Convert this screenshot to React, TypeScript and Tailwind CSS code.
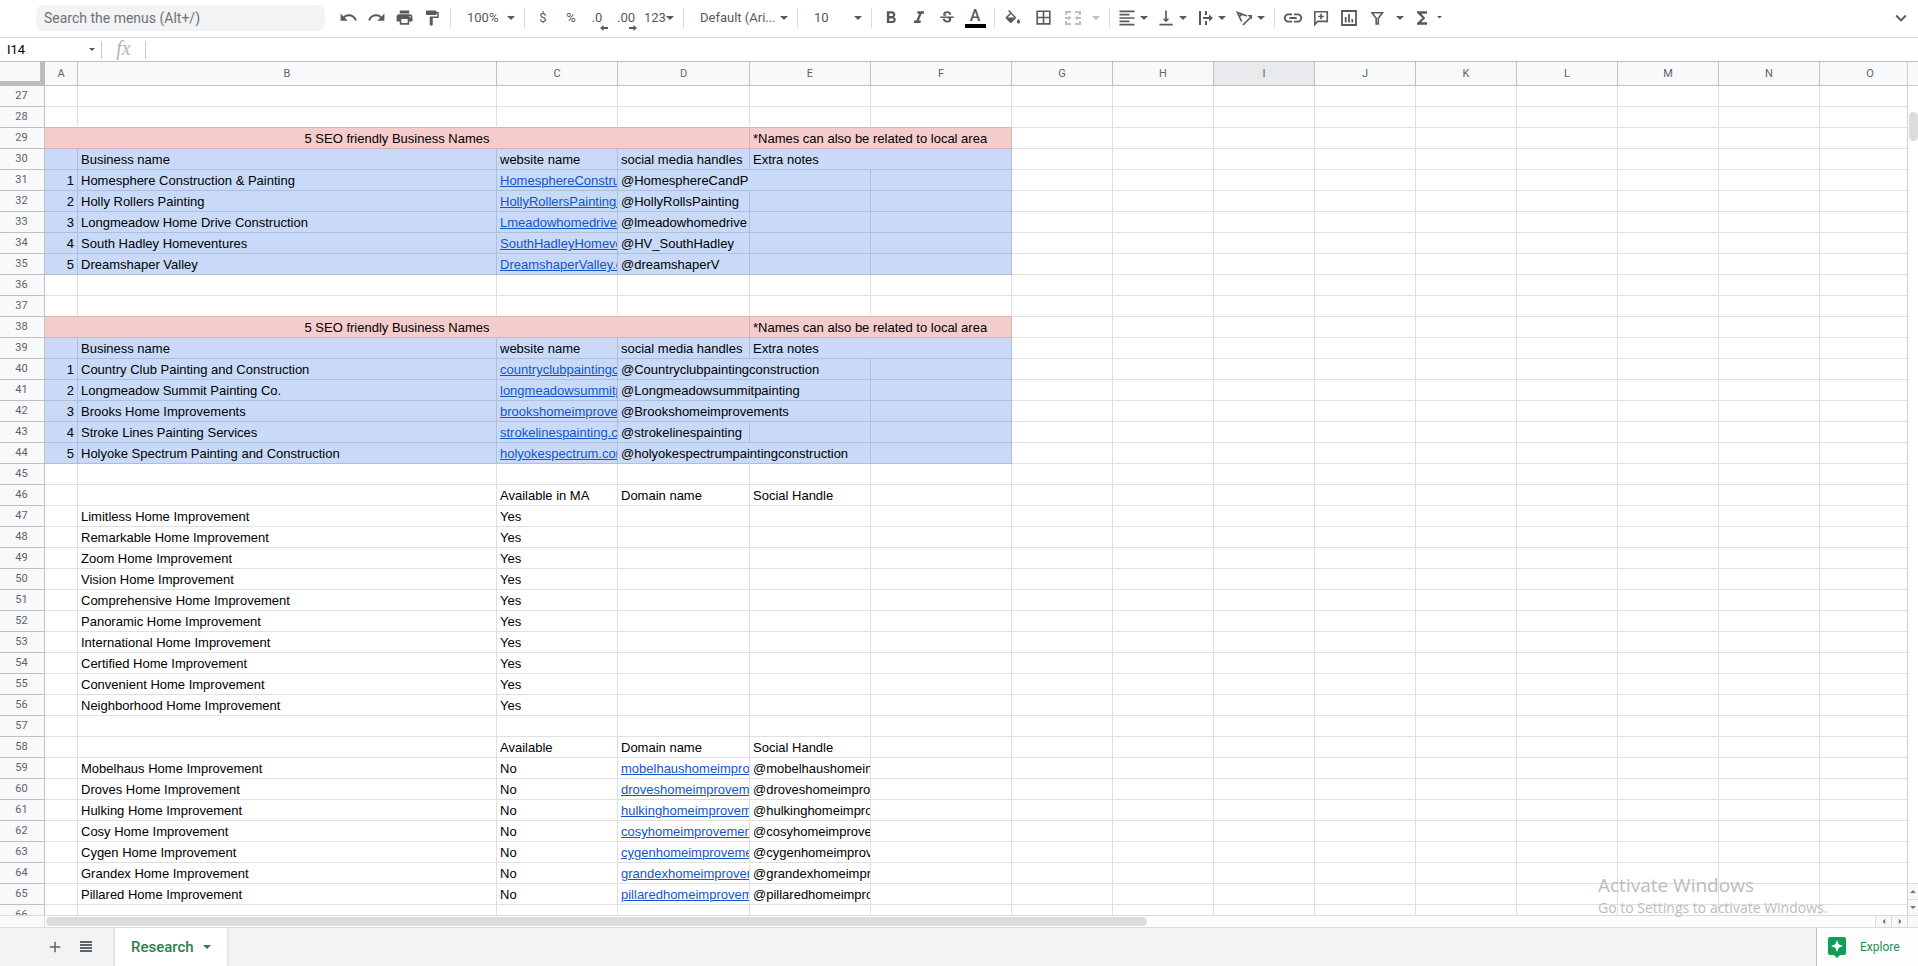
import React from 'react';
import {
  MdAdd,
  MdBorderAll,
  MdFormatAlignLeft,
  MdFormatBold,
  MdFormatItalic,
  MdFormatPaint,
  MdFunctions,
  MdInsertLink,
  MdKeyboardArrowDown,
  MdPrint,
  MdRedo,
  MdStrikethroughS,
  MdUndo,
  MdVerticalAlignBottom,
} from 'react-icons/md';

interface Cell {
  text?: string;
  span?: number;
  link?: boolean;
  align?: 'center' | 'right';
  spill?: boolean; // text runs over the empty neighbour
}

interface Row {
  n: number;
  fill?: 'pink' | 'blue';
  abovePink?: boolean;
  cells?: Cell[];
}

const COLUMNS = ['A', 'B', 'C', 'D', 'E', 'F', 'G', 'H', 'I', 'J', 'K', 'L', 'M', 'N', 'O'];
const FILLED_COLUMNS = 6; // A to F carry the coloured blocks

const titleRow = (n: number): Row => ({
  n,
  fill: 'pink',
  cells: [
    { text: '5 SEO friendly Business Names', span: 4, align: 'center' },
    { text: '*Names can also be related to local area', span: 2 },
  ],
});

const headingRow = (n: number): Row => ({
  n,
  fill: 'blue',
  cells: [
    {},
    { text: 'Business name' },
    { text: 'website name' },
    { text: 'social media handles' },
    { text: 'Extra notes', span: 2 },
  ],
});

const businessRow = (n: number, index: number, name: string, site: string, handle: string, spill = false): Row => ({
  n,
  fill: 'blue',
  cells: [
    { text: String(index), align: 'right' },
    { text: name },
    { text: site, link: true },
    { text: handle, spill },
    {},
    {},
  ],
});

const plainRow = (n: number, name: string, available: string, domain = '', handle = ''): Row => ({
  n,
  cells: [{}, { text: name }, { text: available }, { text: domain, link: domain.includes('.com') }, { text: handle }, {}],
});

const ROWS: Row[] = [
  { n: 27 },
  { n: 28, abovePink: true },
  titleRow(29),
  headingRow(30),
  businessRow(31, 1, 'Homesphere Construction & Painting', 'HomesphereConstruction.com', '@HomesphereCandP', true),
  businessRow(32, 2, 'Holly Rollers Painting', 'HollyRollersPainting.com', '@HollyRollsPainting'),
  businessRow(33, 3, 'Longmeadow Home Drive Construction', 'Lmeadowhomedrive.com', '@lmeadowhomedrive'),
  businessRow(34, 4, 'South Hadley Homeventures', 'SouthHadleyHomeventures.com', '@HV_SouthHadley'),
  businessRow(35, 5, 'Dreamshaper Valley', 'DreamshaperValley.com', '@dreamshaperV'),
  { n: 36 },
  { n: 37, abovePink: true },
  titleRow(38),
  headingRow(39),
  businessRow(40, 1, 'Country Club Painting and Construction', 'countryclubpaintingconstruction.com', '@Countryclubpaintingconstruction', true),
  businessRow(41, 2, 'Longmeadow Summit Painting Co.', 'longmeadowsummitpainting.com', '@Longmeadowsummitpainting', true),
  businessRow(42, 3, 'Brooks Home Improvements', 'brookshomeimprovements.com', '@Brookshomeimprovements', true),
  businessRow(43, 4, 'Stroke Lines Painting Services', 'strokelinespainting.com', '@strokelinespainting'),
  businessRow(44, 5, 'Holyoke Spectrum Painting and Construction', 'holyokespectrum.com', '@holyokespectrumpaintingconstruction', true),
  { n: 45 },
  plainRow(46, '', 'Available in MA', 'Domain name', 'Social Handle'),
  plainRow(47, 'Limitless Home Improvement', 'Yes'),
  plainRow(48, 'Remarkable Home Improvement', 'Yes'),
  plainRow(49, 'Zoom Home Improvement', 'Yes'),
  plainRow(50, 'Vision Home Improvement', 'Yes'),
  plainRow(51, 'Comprehensive Home Improvement', 'Yes'),
  plainRow(52, 'Panoramic Home Improvement', 'Yes'),
  plainRow(53, 'International Home Improvement', 'Yes'),
  plainRow(54, 'Certified Home Improvement', 'Yes'),
  plainRow(55, 'Convenient Home Improvement', 'Yes'),
  plainRow(56, 'Neighborhood Home Improvement', 'Yes'),
  { n: 57 },
  plainRow(58, '', 'Available', 'Domain name', 'Social Handle'),
  plainRow(59, 'Mobelhaus Home Improvement', 'No', 'mobelhaushomeimprovement.com', '@mobelhaushomeimprovement'),
  plainRow(60, 'Droves Home Improvement', 'No', 'droveshomeimprovement.com', '@droveshomeimprovement'),
  plainRow(61, 'Hulking Home Improvement', 'No', 'hulkinghomeimprovement.com', '@hulkinghomeimprovement'),
  plainRow(62, 'Cosy Home Improvement', 'No', 'cosyhomeimprovement.com', '@cosyhomeimprovement'),
  plainRow(63, 'Cygen Home Improvement', 'No', 'cygenhomeimprovement.com', '@cygenhomeimprovement'),
  plainRow(64, 'Grandex Home Improvement', 'No', 'grandexhomeimprovement.com', '@grandexhomeimprovement'),
  plainRow(65, 'Pillared Home Improvement', 'No', 'pillaredhomeimprovement.com', '@pillaredhomeimprovement'),
  { n: 66 },
];

const Caret = ({ className = 'w-2' }: { className?: string }) => (
  <svg viewBox="0 0 8 4" className={`shrink-0 fill-current ${className}`} aria-hidden="true">
    <path d="M0 0h8L4 4z" />
  </svg>
);

const Separator = () => <div className="mx-1 h-5 w-px shrink-0 bg-[#dadce0]" />;

const IconButton = ({ label, children }: { label: string; children: React.ReactNode }) => (
  <button type="button" aria-label={label} className="flex h-7 w-7 shrink-0 items-center justify-center">
    {children}
  </button>
);

const MenuButton = ({ label, children }: { label: string; children: React.ReactNode }) => (
  <button type="button" aria-label={label} className="flex h-7 w-[39px] shrink-0 items-center gap-[3px] pl-[3px]">
    {children}
    <Caret />
  </button>
);

const CaretButton = ({ label, className = '' }: { label: string; className?: string }) => (
  <button type="button" aria-label={label} className={`flex h-7 w-[18px] shrink-0 items-center justify-center ${className}`}>
    <Caret />
  </button>
);

const Picker = ({ label, value, className }: { label: string; value: string; className: string }) => (
  <div className={`relative flex h-7 shrink-0 items-center ${className}`}>
    <select aria-label={label} className="w-full appearance-none bg-transparent pl-3 text-[13px] leading-5 outline-none">
      <option>{value}</option>
    </select>
    <Caret className="pointer-events-none absolute right-[5px] w-2" />
  </div>
);

const FillIcon = () => (
  <svg viewBox="0 0 18 18" className="size-[18px] fill-current">
    <path
      fillRule="evenodd"
      d="M5.2 1 4.1 2.1l1.9 1.9L1.9 8.1c-.4.4-.4 1 0 1.4l4.2 4.2c.4.4 1 .4 1.4 0l4.9-4.9zM7 5.1l3.4 3.4H3.6zM14.5 10s-1.6 1.8-1.6 2.9a1.6 1.6 0 0 0 3.2 0c0-1.100-1.600-2.900-1.600-2.900z"
    />
  </svg>
);

const MergeIcon = () => (
  <svg viewBox="0 0 18 18" className="size-[18px] fill-none stroke-current" strokeWidth="2">
    <path d="M2 6V3h5M11 3h5v3M2 12v3h5M11 15h5v-3M1 9h4M17 9h-4" />
    <path d="M4.500 6.500 7.500 9l-3 2.500zM13.500 6.500 10.500 9l3 2.500z" className="fill-current" strokeWidth="0" />
  </svg>
);

const WrapIcon = () => (
  <svg viewBox="0 0 20 20" className="size-5 fill-none stroke-current" strokeWidth="2">
    <path d="M5 3v14M11 3v4M11 13v4M8 10h9" />
    <path d="m14 6.500 4 3.500-4 3.500z" className="fill-current" strokeWidth="0" />
  </svg>
);

const RotateIcon = () => (
  <svg viewBox="0 0 20 20" className="size-5 fill-none stroke-current" strokeWidth="1.700">
    <path d="m7.500 13.500-4-9 9.500 3.500M5 8.500l3.500-2.500M9 17l8-8" />
    <path d="M13.500 7H18v4.500z" className="fill-current" strokeWidth="0" />
  </svg>
);

const CommentIcon = () => (
  <svg viewBox="0 0 18 18" className="size-[18px] fill-none stroke-current" strokeWidth="1.600">
    <path d="M2.800 15.500V2.800h12.500v9.600H5.700zM9 4.800v5.400M6.300 7.500h5.400" />
  </svg>
);

const ChartIcon = () => (
  <svg viewBox="0 0 18 18" className="size-[18px] fill-none stroke-current" strokeWidth="1.800">
    <path d="M2 2h14v14H2zM5.700 8v5.500M9 5v8.500M12.300 10v3.500" />
  </svg>
);

const FilterIcon = () => (
  <svg viewBox="0 0 18 18" className="size-[18px] fill-none stroke-current" strokeWidth="1.600">
    <path d="M4 3.800h10.500l-4.200 5.400V15H8.200V9.200z" />
  </svg>
);

const DecimalArrow = ({ right = false }: { right?: boolean }) => (
  <svg viewBox="0 0 8 6" className={`absolute -bottom-1 w-2 fill-current ${right ? '-right-0.5' : '-right-1.5'}`}>
    {right ? <path d="M0 2h4.500V0L8 3 4.500 6V4H0z" /> : <path d="M8 2H3.500V0L0 3l3.500 3V4H8z" />}
  </svg>
);

function Toolbar() {
  return (
    <div className="flex h-[38px] shrink-0 items-center border-b border-[#dadce0] pr-[3px] pb-0.5 pl-9 text-[13px] text-[#575a5e]">
      <input
        aria-label="Search the menus"
        placeholder="Search the menus (Alt+/)"
        className="mr-[9px] h-[26px] w-[289px] shrink-0 rounded-lg bg-[#f1f3f4] px-2 text-sm outline-none placeholder:text-[#6f7276]"
      />
      <IconButton label="Undo"><MdUndo className="size-[19px]" /></IconButton>
      <IconButton label="Redo"><MdRedo className="size-[19px]" /></IconButton>
      <IconButton label="Print"><MdPrint className="size-[19px]" /></IconButton>
      <IconButton label="Paint format"><MdFormatPaint className="size-[18px]" /></IconButton>
      <Separator />
      <Picker label="Zoom" value="100%" className="w-[65px]" />
      <Separator />
      <IconButton label="Format as currency">$</IconButton>
      <IconButton label="Format as percent">%</IconButton>
      <IconButton label="Decrease decimal places">
        <span className="relative mr-1">.0<DecimalArrow /></span>
      </IconButton>
      <IconButton label="Increase decimal places">
        <span className="relative mr-0.5">.00<DecimalArrow right /></span>
      </IconButton>
      <button type="button" className="flex h-7 w-[38px] shrink-0 items-center pl-[3px]">
        123<Caret />
      </button>
      <Separator />
      <Picker label="Font" value="Default (Ari..." className="w-[105px]" />
      <Separator />
      <Picker label="Font size" value="10" className="w-[65px]" />
      <Separator />
      <div className="flex px-px">
        <IconButton label="Bold"><MdFormatBold className="size-5" /></IconButton>
        <IconButton label="Italic"><MdFormatItalic className="size-5" /></IconButton>
        <IconButton label="Strikethrough"><MdStrikethroughS className="size-[18px]" /></IconButton>
        <IconButton label="Text color">
          <span className="w-[21px] border-b-4 border-black text-center text-base leading-[17px] font-medium">A</span>
        </IconButton>
      </div>
      <Separator />
      <div className="flex gap-0.5">
        <IconButton label="Fill color"><FillIcon /></IconButton>
        <IconButton label="Borders"><MdBorderAll className="size-[19px]" /></IconButton>
        <div className="flex text-[#bdbfc2]">
          <IconButton label="Merge cells"><MergeIcon /></IconButton>
          <CaretButton label="Merge type" />
        </div>
      </div>
      <Separator />
      <MenuButton label="Horizontal align"><MdFormatAlignLeft className="size-5" /></MenuButton>
      <MenuButton label="Vertical align"><MdVerticalAlignBottom className="size-5" /></MenuButton>
      <MenuButton label="Text wrapping"><WrapIcon /></MenuButton>
      <MenuButton label="Text rotation"><RotateIcon /></MenuButton>
      <Separator />
      <IconButton label="Insert link"><MdInsertLink className="size-[22px]" /></IconButton>
      <IconButton label="Insert comment"><CommentIcon /></IconButton>
      <IconButton label="Insert chart"><ChartIcon /></IconButton>
      <IconButton label="Create a filter"><FilterIcon /></IconButton>
      <CaretButton label="Filter views" />
      <button type="button" aria-label="Functions" className="flex h-7 w-9 shrink-0 items-center gap-[5px] pl-[3px]">
        <MdFunctions className="size-5" />
        <Caret className="w-[5px]" />
      </button>
      <div className="ml-auto">
        <IconButton label="Hide the menus"><MdKeyboardArrowDown className="size-[22px]" /></IconButton>
      </div>
    </div>
  );
}

function FormulaBar() {
  return (
    <div className="flex h-6 shrink-0 items-center border-b border-[#c0c0c0]">
      <div className="relative flex h-full w-[101px] items-center text-[#575a5e]">
        <input aria-label="Name box" defaultValue="I14" className="w-full pl-[7px] text-[13px] text-black outline-none" />
        <Caret className="pointer-events-none absolute right-1.5 w-[6px]" />
      </div>
      <div className="h-[18px] w-px bg-[#c8cacd]" />
      <label htmlFor="formula" className="w-[43px] pb-1 text-center font-['Liberation_Serif',serif] text-xl leading-5 text-[#b4b4b4] italic">
        fx
      </label>
      <div className="h-[18px] w-px bg-[#c8cacd]" />
      <input id="formula" className="h-full flex-1 px-2 text-[13px] outline-none" />
    </div>
  );
}

const FILLS = {
  pink: 'bg-[#f4cccc]',
  blue: 'bg-[#c9daf8]',
};

function SheetRow({ row }: { row: Row }) {
  const cells = row.cells ?? Array.from({ length: FILLED_COLUMNS }, () => ({}) as Cell);
  return (
    <tr>
      <th scope="row" className="h-[21px] border-r border-b border-[#c0c0c0] bg-[#f8f9fa] p-0 pr-px align-top font-['Roboto',sans-serif] text-[11px] leading-[19px] font-normal text-[#5f6368]">
        {row.n}
      </th>
      {cells.map((cell, i) => (
        <td
          key={i}
          colSpan={cell.span}
          className={`h-[21px] border-r border-b px-[3px] pt-0.5 pb-0 whitespace-nowrap ${row.fill ? FILLS[row.fill] : ''} ${
            row.abovePink ? 'border-r-black/12 border-b-[#d9b6b6]' : 'border-black/12'
          } ${cell.spill ? 'overflow-visible border-r-transparent' : 'overflow-hidden'} ${
            cell.align === 'center' ? 'text-center' : cell.align === 'right' ? 'text-right' : 'text-left'
          }`}
        >
          {cell.link ? (
            <a href={`http://${cell.text}`} className="text-[#1155cc] underline">{cell.text}</a>
          ) : (
            cell.text
          )}
        </td>
      ))}
      {COLUMNS.slice(FILLED_COLUMNS).map((c) => (
        <td key={c} className="border-r border-b border-black/12 p-0" />
      ))}
    </tr>
  );
}

function Sheet() {
  return (
    <div className="min-w-0 flex-1 overflow-hidden">
      <table className="w-px table-fixed border-separate border-spacing-0 font-['Liberation_Sans',Arial,sans-serif] text-[13px] leading-[18px] text-black">
        <colgroup>
          <col className="w-[45px]" />
          <col className="w-[33px]" />
          <col className="w-[419px]" />
          <col className="w-[121px]" />
          <col className="w-[132px]" />
          <col className="w-[121px]" />
          <col className="w-[141px]" />
          {COLUMNS.slice(FILLED_COLUMNS).map((c) => (
            <col key={c} className="w-[101px]" />
          ))}
        </colgroup>
        <thead>
          <tr>
            <td className="h-6 border-r-[5px] border-b-[5px] border-[#bdbdbd] bg-[#f8f9fa] p-0" />
            {COLUMNS.map((c) => (
              <th
                key={c}
                scope="col"
                className={`h-6 border-r border-b border-[#c0c0c0] p-0 font-['Roboto',sans-serif] text-[11px] font-normal text-[#5f6368] ${
                  c === 'I' ? 'bg-[#e8eaed]' : 'bg-[#f8f9fa]'
                }`}
              >
                {c}
              </th>
            ))}
          </tr>
        </thead>
        <tbody>
          {ROWS.map((row) => (
            <SheetRow key={row.n} row={row} />
          ))}
        </tbody>
      </table>
    </div>
  );
}

const ScrollArrow = ({ label, turn, className }: { label: string; turn: string; className: string }) => (
  <button type="button" aria-label={label} className={`flex shrink-0 items-center justify-center border-[#dadce0] bg-[#f8f8f8] text-[#777] ${className}`}>
    <Caret className={`w-[6px] ${turn}`} />
  </button>
);

function VerticalScrollbar() {
  return (
    <div className="flex w-[11px] shrink-0 flex-col border-l border-[#d0d0d0]">
      <div className="h-6 shrink-0 border-b border-[#d0d0d0] bg-[#f8f9fa]" />
      <div className="flex-1 pt-[26px] pl-px">
        <div className="h-[29px] rounded-full bg-[#dadce0]" />
      </div>
      <ScrollArrow label="Scroll up" turn="rotate-180" className="h-4 border-t" />
      <ScrollArrow label="Scroll down" turn="" className="h-4 border-t" />
    </div>
  );
}

function HorizontalScrollbar() {
  return (
    <div className="flex h-[13px] shrink-0 border-y border-[#dadce0]">
      <div className="w-[45px] shrink-0 border-r border-[#dadce0] bg-[#f8f9fa]" />
      <div className="flex flex-1 items-center pl-px">
        <div className="h-[9px] w-[60.2%] rounded-full bg-[#dadce0]" />
      </div>
      <ScrollArrow label="Scroll left" turn="rotate-90" className="w-4 border-l" />
      <ScrollArrow label="Scroll right" turn="-rotate-90" className="w-4 border-l" />
      <div className="w-[11px] shrink-0 border-l border-[#dadce0] bg-[#f8f8f8]" />
    </div>
  );
}

function TabBar() {
  return (
    <div className="flex h-[38px] shrink-0 bg-[#f1f3f4] pl-[39px] text-[#5f6368]">
      <button type="button" aria-label="Add sheet" className="flex w-[31px] items-center justify-center">
        <MdAdd className="size-[18px]" />
      </button>
      <button type="button" aria-label="All sheets" className="flex w-[31px] items-center justify-center">
        <svg viewBox="0 0 12 12" className="w-3 fill-current">
          <path d="M0 0h12v2H0zM0 3h12v2H0zM0 6h12v2H0zM0 9h12v2H0z" />
        </svg>
      </button>
      <button
        type="button"
        className="ml-3 flex items-center gap-[9px] border-x-2 border-[#e4e6e8] bg-white px-4 text-[15px] font-medium text-[#2c8048]"
      >
        Research
        <Caret />
      </button>
      <button type="button" className="ml-auto flex w-[102px] items-center gap-[14px] border-l border-[#c0c0c0] bg-[#fcfdfd] pl-[11px] text-xs text-[#1e8e4e]">
        <svg viewBox="0 0 18 21" className="w-[18px]">
          <path d="M2 0h14a2 2 0 0 1 2 2v14a2 2 0 0 1-2 2h-4l-3 3-3-3H2a2 2 0 0 1-2-2V2a2 2 0 0 1 2-2z" fill="#0f9d58" />
          <path d="m9 3 1.700 4.300L15 9l-4.300 1.700L9 15l-1.700-4.300L3 9l4.300-1.700z" fill="#fff" />
        </svg>
        Explore
      </button>
    </div>
  );
}

export default function App() {
  return (
    <div className="relative flex h-screen flex-col overflow-hidden bg-white font-['Roboto',sans-serif]">
      <Toolbar />
      <FormulaBar />
      <div className="flex min-h-0 flex-1">
        <Sheet />
        <VerticalScrollbar />
      </div>
      <HorizontalScrollbar />
      <TabBar />
      {/* OS watermark sits over the grid */}
      <div className="pointer-events-none absolute right-[84px] bottom-[47px] w-[236px] font-['Open_Sans',sans-serif] whitespace-nowrap text-[#bcbcbc]">
        <p className="text-[19px] leading-6">Activate Windows</p>
        <p className="text-sm leading-[22px]">Go to Settings to activate Windows.</p>
      </div>
    </div>
  );
}
